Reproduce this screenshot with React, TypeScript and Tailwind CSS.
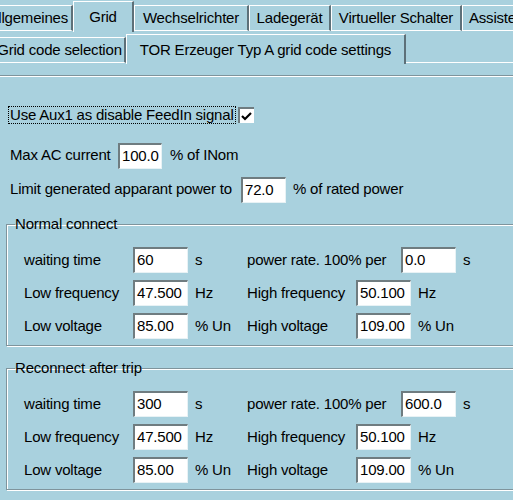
import React from "react";

const FONT = "font-['Liberation_Sans',Arial,sans-serif] text-[15px] tracking-[-0.2px] text-black";

function Tab({
  label,
  width,
  selected,
  className = "",
}: {
  label: string;
  width: string;
  selected?: boolean;
  className?: string;
}) {
  return (
    <div
      className={`flex shrink-0 items-center justify-center border-l border-t border-r-2 border-l-white border-t-white border-r-[#5d7079] ${width} ${
        selected ? "relative z-10 -mb-px h-[31px] bg-[#a9d1de]" : "h-[26px] border-b border-b-white"
      } ${className}`}
    >
      <span className="whitespace-nowrap">{label}</span>
    </div>
  );
}

function Field({ value, width = "w-[55px]" }: { value: string; width?: string }) {
  return (
    <div
      className={`flex h-[26px] shrink-0 items-center border-l-2 border-t-2 border-l-[#6f7c80] border-t-[#6f7c80] border-b border-r border-b-[#e8f2f5] border-r-[#e8f2f5] bg-white pl-[2px] ${width}`}
    >
      {value}
    </div>
  );
}

type Row = {
  label: string;
  value: string;
  unit: string;
  label2: string;
  value2: string;
  unit2: string;
  wide?: boolean;
};

function Group({ title, rows, className = "" }: { title: string; rows: Row[]; className?: string }) {
  return (
    <fieldset
      className={`ml-[6px] w-[540px] border border-[#7f949c] shadow-[inset_1px_1px_0_#ffffff,1px_1px_0_#ffffff] ${className}`}
    >
      <legend className="ml-[8px] px-0 leading-[16px]">{title}</legend>
      <div className="flex flex-col gap-[7px] pb-[6px] pl-[17px] pt-[15px]">
        {rows.map((r) => (
          <div key={r.label} className="flex h-[26px] items-center">
            <span className="w-[109px] shrink-0">{r.label}</span>
            <Field value={r.value} />
            <span className="w-[59px] shrink-0 pl-[7px]">{r.unit}</span>
            <span className={`${r.wide ? "w-[154px]" : "w-[109px]"} shrink-0`}>{r.label2}</span>
            <Field value={r.value2} />
            <span className="shrink-0 pl-[7px]">{r.unit2}</span>
          </div>
        ))}
      </div>
    </fieldset>
  );
}

export default function App() {
  const normal: Row[] = [
    { label: "waiting time", value: "60", unit: "s", label2: "power rate. 100% per", value2: "0.0", unit2: "s", wide: true },
    { label: "Low frequency", value: "47.500", unit: "Hz", label2: "High frequency", value2: "50.100", unit2: "Hz" },
    { label: "Low voltage", value: "85.00", unit: "% Un", label2: "High voltage", value2: "109.00", unit2: "% Un" },
  ];
  const reconnect: Row[] = [
    { label: "waiting time", value: "300", unit: "s", label2: "power rate. 100% per", value2: "600.0", unit2: "s", wide: true },
    { label: "Low frequency", value: "47.500", unit: "Hz", label2: "High frequency", value2: "50.100", unit2: "Hz" },
    { label: "Low voltage", value: "85.00", unit: "% Un", label2: "High voltage", value2: "109.00", unit2: "% Un" },
  ];

  return (
    <div className={`h-[500px] w-[513px] overflow-hidden bg-[#a9d1de] ${FONT}`}>
      {/* top tabs */}
      <div className="flex h-[31px] items-end">
        <Tab label="Allgemeines" width="w-[82px]" className="-ml-[9px] justify-end pr-[3px]" />
        <Tab label="Grid" width="w-[61px]" selected />
        <Tab label="Wechselrichter" width="w-[115px]" />
        <Tab label="Ladegerät" width="w-[82px]" />
        <Tab label="Virtueller Schalter" width="w-[131px]" />
        <Tab label="Assistent" width="w-[80px]" className="justify-start pl-[6px]" />
      </div>

      {/* sub tabs */}
      <div className="flex h-[32px] items-end">
        <Tab label="Grid code selection" width="w-[132px]" className="-ml-[6px]" />
        <Tab label="TOR Erzeuger Typ A grid code settings" width="w-[280px]" selected className="!h-[30px] items-start pt-[4px]" />
        <div className="h-px flex-1 bg-white" />
      </div>

      <div className="mt-[12px] h-px bg-[#7f949c]" />
      <div className="h-px bg-white" />

      <div className="flex flex-col pl-[8px] pt-[29px]">
        <div className="flex h-[18px] items-center">
          <span className="border border-dotted border-black px-[1px] leading-[16px]">Use Aux1 as disable FeedIn signal</span>
          <span className="ml-[2px] flex h-[16px] w-[16px] items-center justify-center border-l-2 border-t-2 border-l-[#6f7c80] border-t-[#6f7c80] bg-white">
            <svg width="11" height="9" viewBox="0 0 11 9">
              <path d="M1 4 L4 7 L10 1" stroke="black" strokeWidth="2.2" fill="none" />
            </svg>
          </span>
        </div>

        <div className="mt-[19px] flex h-[25px] items-center pl-[2px]">
          <span className="w-[108px] shrink-0">Max AC current</span>
          <Field value="100.0" width="w-[44px]" />
          <span className="pl-[8px]">% of INom</span>
        </div>

        <div className="mt-[9px] flex h-[25px] items-center pl-[2px]">
          <span className="w-[231px] shrink-0">Limit generated apparant power to</span>
          <Field value="72.0" width="w-[45px]" />
          <span className="pl-[7px]">% of rated power</span>
        </div>
      </div>

      <Group title="Normal connect" rows={normal} className="mt-[14px]" />
      <Group title="Reconnect after trip" rows={reconnect} className="mt-[14px]" />
    </div>
  );
}
